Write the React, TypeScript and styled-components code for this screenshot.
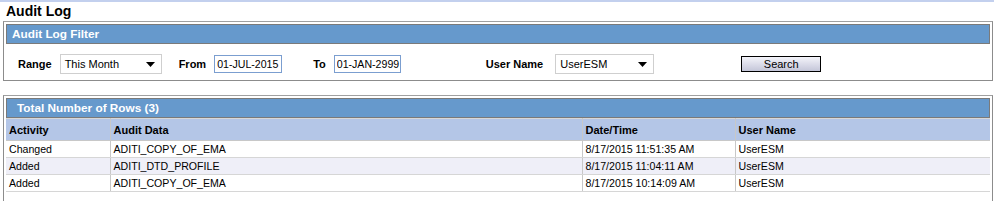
import React from "react";
import styled, {createGlobalStyle} from "styled-components";

const FONT = `"Liberation Sans", Arial, sans-serif`;

const GlobalStyle = createGlobalStyle`
  html, body {
    margin: 0;
    padding: 0;
    background: #fff;
  }
  body {
    font-family: ${FONT};
    font-size: 11px;
    color: #000;
  }
`

interface IAuditRow {
    activity: string;
    data: string;
    date: string;
    user: string;
}

const rows: IAuditRow[] = [
    {activity: 'Changed', data: 'ADITI_COPY_OF_EMA', date: '8/17/2015 11:51:35 AM', user: 'UserESM'},
    {activity: 'Added', data: 'ADITI_DTD_PROFILE', date: '8/17/2015 11:04:11 AM', user: 'UserESM'},
    {activity: 'Added', data: 'ADITI_COPY_OF_EMA', date: '8/17/2015 10:14:09 AM', user: 'UserESM'},
];

const Arrow = () => (
    <svg width="9" height="5" viewBox="0 0 9 5">
        <path d="M0 0 L9 0 L4.5 5 Z" fill="#000"/>
    </svg>
)

const App = () => {
    return (
        <Page>
            <GlobalStyle/>
            <PageTitle>Audit Log</PageTitle>
            <Panel>
                <PanelHeader>Audit Log Filter</PanelHeader>
                <FilterRow>
                    <Label>Range</Label>
                    <SelectBox width={102}>
                        <span>This Month</span>
                        <Arrow/>
                    </SelectBox>
                    <Label gap={17}>From</Label>
                    <DateInput value="01-JUL-2015" readOnly/>
                    <Label gap={31}>To</Label>
                    <DateInput value="01-JAN-2999" readOnly width={67}/>
                    <Label gap={85} space={12}>User Name</Label>
                    <SelectBox width={99}>
                        <span>UserESM</span>
                        <Arrow/>
                    </SelectBox>
                    <SearchButton>Search</SearchButton>
                </FilterRow>
            </Panel>
            <Panel tall>
                <PanelHeader indent={10}>Total Number of Rows (3)</PanelHeader>
                <Table>
                    <colgroup>
                        <col style={{width: 104}}/>
                        <col style={{width: 472}}/>
                        <col style={{width: 153}}/>
                        <col/>
                    </colgroup>
                    <thead>
                    <tr>
                        <HeadCell>Activity</HeadCell>
                        <HeadCell>Audit Data</HeadCell>
                        <HeadCell>Date/Time</HeadCell>
                        <HeadCell>User Name</HeadCell>
                    </tr>
                    </thead>
                    <tbody>
                    {rows.map((row, i) => (
                        <Row key={i} alt={i % 2 === 1}>
                            <Cell>{row.activity}</Cell>
                            <Cell>{row.data}</Cell>
                            <Cell>{row.date}</Cell>
                            <Cell>{row.user}</Cell>
                        </Row>
                    ))}
                    </tbody>
                </Table>
            </Panel>
        </Page>
    )
}

const Page = styled.div`
  width: 994px;
  height: 201px;
  overflow: hidden;
  border-top: 2px solid #c3d0ee;
  box-sizing: border-box;
`

const PageTitle = styled.div`
  font-weight: bold;
  font-size: 14px;
  height: 19px;
  line-height: 19px;
  padding-left: 6px;
  color: #000;
`

const Panel = styled.div<{tall?: boolean}>`
  margin: 0 1px 14px 3px;
  border: 1px solid #8c8c8c;
  border-top-color: #a0a0a0;
  padding: 2px 2px ${p => p.tall ? '40px' : '0'} 2px;
`

const PanelHeader = styled.div<{indent?: number}>`
  background: #6699cc;
  border: 1px solid #7a7a7a;
  color: #fff;
  font-weight: bold;
  font-size: 11.8px;
  height: 18px;
  line-height: 18px;
  padding-left: ${p => p.indent ?? 5}px;
`

const FilterRow = styled.div`
  display: flex;
  align-items: center;
  height: 32px;
  padding: 4px 0 0 12px;
`

const Label = styled.span<{gap?: number, space?: number}>`
  font-weight: bold;
  font-size: 11px;
  margin-left: ${p => p.gap ?? 0}px;
  margin-right: ${p => p.space ?? 8}px;
`

const SelectBox = styled.div<{width: number}>`
  width: ${p => p.width}px;
  height: 20px;
  box-sizing: border-box;
  border: 1px solid #cfcfcf;
  background: #fff;
  display: flex;
  align-items: center;
  justify-content: space-between;
  padding: 0 6px 0 4px;
  font-size: 11px;
`

const DateInput = styled.input<{width?: number}>`
  width: ${p => p.width ?? 68}px;
  height: 18px;
  box-sizing: border-box;
  border: 1px solid #7b9ed0;
  padding: 0 0 0 2px;
  font-family: ${FONT};
  font-size: 10.6px;
  color: #000;
  outline: none;
`

const SearchButton = styled.button`
  margin-left: 87px;
  width: 80px;
  height: 16px;
  box-sizing: border-box;
  border: 1px solid #000;
  background: linear-gradient(#f4f4fa, #d7d8e6 60%, #c4c6d8);
  font-family: ${FONT};
  font-size: 11px;
  padding: 0;
  color: #000;
`

const Table = styled.table`
  width: 100%;
  border-collapse: collapse;
  table-layout: fixed;
  font-size: 10.6px;
`

const HeadCell = styled.th`
  background: #b4c6e7;
  text-align: left;
  font-weight: bold;
  font-size: 11px;
  height: 21px;
  padding: 0 3px;
  border-right: 1px solid #c8c8c8;
  border-bottom: 1px solid #c8c8c8;
  border-top: 1px solid #d8d8d8;
  &:last-child {
    border-right: none;
  }
`

const Row = styled.tr<{alt?: boolean}>`
  background: ${p => p.alt ? '#efeff8' : '#fff'};
`

const Cell = styled.td`
  height: 16px;
  padding: 0 3px;
  border-right: 1px solid #c8c8c8;
  border-bottom: 1px solid #d6d6d6;
  white-space: nowrap;
  &:last-child {
    border-right: none;
  }
`

export default App;
